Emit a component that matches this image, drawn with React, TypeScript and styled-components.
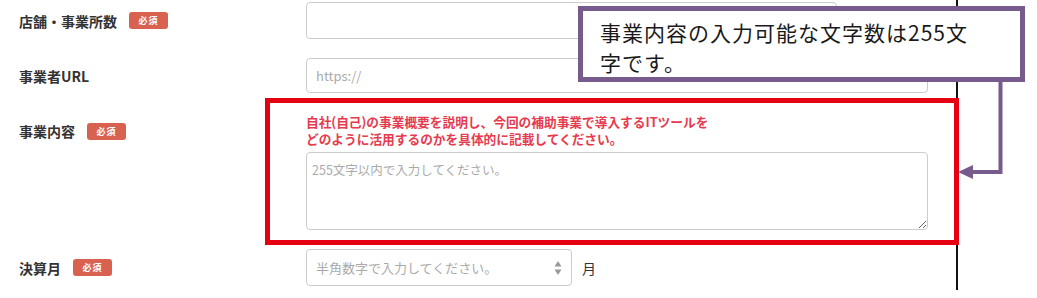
import styled, { createGlobalStyle } from 'styled-components';
import { FC } from 'react';

const purple = '#775b8c';

const GlobalStyle = createGlobalStyle`
  html, body {
    margin: 0;
    padding: 0;
    background: #fff;
  }
  body {
    font-family: "Noto Sans CJK JP", "Noto Sans", sans-serif;
    color: #333;
  }
`;

const SC = {
  Page: styled.div`
    position: relative;
    width: 1037px;
    height: 298px;
    overflow: hidden;
  `,
  FormPanel: styled.div`
    box-sizing: border-box;
    width: 958px;
    height: 290px;
    padding-top: 2px;
    border-right: 2px solid #111;
  `,
  Row: styled.div<{ $top: number; $alignTop?: boolean }>`
    display: grid;
    grid-template-columns: 306px 1fr;
    align-items: ${(p) => (p.$alignTop ? 'start' : 'center')};
    margin-top: ${(p) => p.$top}px;
  `,
  LabelCell: styled.div<{ $padTop?: number }>`
    display: flex;
    align-items: center;
    gap: 12px;
    padding-left: 19px;
    padding-top: ${(p) => p.$padTop ?? 0}px;
    height: 20px;
  `,
  LabelText: styled.span`
    font-size: 14px;
    font-weight: 700;
    color: #333;
    line-height: 20px;
  `,
  Badge: styled.span`
    display: inline-flex;
    align-items: center;
    justify-content: center;
    width: 39px;
    height: 17px;
    border-radius: 3px;
    background: #d8624f;
    color: #fff;
    font-size: 9px;
    font-weight: 700;
    letter-spacing: 1px;
  `,
  FieldCell: styled.div`
    display: flex;
    align-items: center;
    gap: 10px;
  `,
  TextInput: styled.input<{ $width: number; $height: number }>`
    box-sizing: border-box;
    width: ${(p) => p.$width}px;
    height: ${(p) => p.$height}px;
    padding: 0 9px;
    border: 1px solid #ccc;
    border-radius: 4px;
    font-family: inherit;
    font-size: 13px;
    background: #fff;
    &::placeholder {
      color: #aaa;
    }
  `,
  Highlight: styled.div`
    box-sizing: border-box;
    width: 694px;
    margin-left: -41px;
    padding: 10px 26px 10px 36px;
    border: 5px solid #e50012;
  `,
  Notice: styled.p`
    margin: 0;
    font-size: 12.7px;
    font-weight: 700;
    line-height: 17px;
    color: #e63b4e;
  `,
  TextArea: styled.textarea`
    display: block;
    box-sizing: border-box;
    width: 622px;
    height: 78px;
    margin-top: 5px;
    padding: 7px 5px;
    border: 1px solid #ccc;
    border-radius: 4px;
    font-family: inherit;
    font-size: 12.5px;
    &::placeholder {
      color: #aaa;
    }
  `,
  NumberBox: styled.div`
    box-sizing: border-box;
    display: flex;
    align-items: center;
    width: 266px;
    height: 37px;
    padding: 0 9px 0 7px;
    border: 1px solid #ccc;
    border-radius: 4px;
  `,
  NumberInput: styled.input`
    flex: 1;
    min-width: 0;
    border: none;
    outline: none;
    font-family: inherit;
    font-size: 13px;
    &::placeholder {
      color: #aaa;
    }
  `,
  Unit: styled.span`
    font-size: 14px;
    color: #333;
  `,
  Callout: styled.div`
    position: absolute;
    left: 578px;
    top: 6px;
    box-sizing: border-box;
    width: 447px;
    height: 76px;
    padding: 6px 0 0 17px;
    border: 5px solid ${purple};
    background: #fff;
    font-size: 21px;
    line-height: 30px;
    letter-spacing: 1px;
    color: #1a1a1a;
  `,
  Connector: styled.svg`
    position: absolute;
    left: 950px;
    top: 78px;
  `,
};

const Spinner: FC = () => (
  <svg width="8" height="16" viewBox="0 0 8 16">
    <path d="M4 1 L7.5 6.5 H0.5 Z" fill="#999" />
    <path d="M4 15 L7.5 9.5 H0.5 Z" fill="#999" />
  </svg>
);

const App: FC = () => {
  return (
    <>
      <GlobalStyle />
      <SC.Page>
        <SC.FormPanel>
          <SC.Row $top={0}>
            <SC.LabelCell>
              <SC.LabelText>店舗・事業所数</SC.LabelText>
              <SC.Badge>必須</SC.Badge>
            </SC.LabelCell>
            <SC.FieldCell>
              <SC.TextInput $width={531} $height={37} />
            </SC.FieldCell>
          </SC.Row>
          <SC.Row $top={19}>
            <SC.LabelCell>
              <SC.LabelText>事業者URL</SC.LabelText>
            </SC.LabelCell>
            <SC.FieldCell>
              <SC.TextInput $width={622} $height={35} placeholder="https://" />
            </SC.FieldCell>
          </SC.Row>
          <SC.Row $top={5} $alignTop>
            <SC.LabelCell $padTop={23}>
              <SC.LabelText>事業内容</SC.LabelText>
              <SC.Badge>必須</SC.Badge>
            </SC.LabelCell>
            <div>
              <SC.Highlight>
                <SC.Notice>
                  自社(自己)の事業概要を説明し、今回の補助事業で導入するITツールを
                  <br />
                  どのように活用するのかを具体的に記載してください。
                </SC.Notice>
                <SC.TextArea placeholder="255文字以内で入力してください。" />
              </SC.Highlight>
            </div>
          </SC.Row>
          <SC.Row $top={4}>
            <SC.LabelCell>
              <SC.LabelText>決算月</SC.LabelText>
              <SC.Badge>必須</SC.Badge>
            </SC.LabelCell>
            <SC.FieldCell>
              <SC.NumberBox>
                <SC.NumberInput placeholder="半角数字で入力してください。" />
                <Spinner />
              </SC.NumberBox>
              <SC.Unit>月</SC.Unit>
            </SC.FieldCell>
          </SC.Row>
        </SC.FormPanel>

        <SC.Callout>
          事業内容の入力可能な文字数は255文
          <br />
          字です。
        </SC.Callout>
        <SC.Connector width="60" height="110" viewBox="0 0 60 110">
          <path d="M50.5 0 V94 H22" fill="none" stroke={purple} strokeWidth="4" />
          <path d="M8 94 L23 87 L23 101 Z" fill={purple} />
        </SC.Connector>
      </SC.Page>
    </>
  );
};

export default App;
